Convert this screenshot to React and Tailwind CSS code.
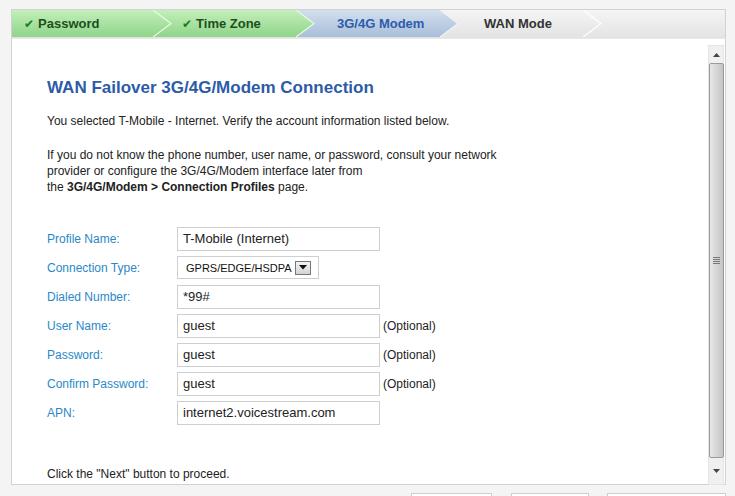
import { useState } from "react";

const tabs = [
  { label: "Password", done: true, w: "w-[141px]", pad: "pl-[12px]", kind: "green" },
  { label: "Time Zone", done: true, w: "w-[143px]", pad: "pl-[29px]", kind: "green" },
  { label: "3G/4G Modem", done: false, w: "w-[144px]", pad: "pl-[41px]", kind: "blue" },
  { label: "WAN Mode", done: false, w: "w-[143px]", pad: "pl-[44px]", kind: "gray" },
];

const tabBg = {
  green: "bg-gradient-to-b from-[#c3efbb] to-[#8fd488] text-[#1d4f1d]",
  blue: "bg-gradient-to-b from-[#d3dfed] to-[#a8bed9] text-[#2d5cad]",
  gray: "bg-gradient-to-b from-[#f5f5f5] to-[#e3e3e3] text-[#333]",
};

const arrowColors = {
  green: ["#c3efbb", "#8fd488", "#e6fbe2"],
  blue: ["#d3dfed", "#a8bed9", "#eef3f9"],
  gray: ["#f5f5f5", "#e3e3e3", "#ffffff"],
};

function Arrow({ kind, id }) {
  const [top, bottom, edge] = arrowColors[kind];
  return (
    <svg className="absolute left-full top-0 z-10" width="19" height="27" viewBox="0 0 19 27">
      <defs>
        <linearGradient id={id} x1="0" y1="0" x2="0" y2="1">
          <stop offset="0" stopColor={top} />
          <stop offset="1" stopColor={bottom} />
        </linearGradient>
      </defs>
      <polygon points="0,0 18,13.5 0,27" fill={`url(#${id})`} />
      <polyline points="0,0 18,13.5 0,27" fill="none" stroke={edge} strokeWidth="1.2" />
    </svg>
  );
}

function TextField({ value }) {
  return (
    <div className="w-[203px] h-[24px] border border-[#cfcfcf] bg-white flex items-center pl-[5px] text-[13px] text-[#222]">
      {value}
    </div>
  );
}

function SelectField({ value }) {
  return (
    <div className="w-[142px] h-[23px] border border-[#cfcfcf] bg-white flex items-center pl-[8px] text-[11px] text-[#111]">
      <span>{value}</span>
      <span className="ml-[3px] w-[16px] h-[14px] border border-[#777] bg-gradient-to-b from-[#f4f4f4] to-[#d4d4d4] flex items-center justify-center">
        <svg width="8" height="5" viewBox="0 0 8 5">
          <polygon points="0,0 8,0 4,4.5" fill="#111" />
        </svg>
      </span>
    </div>
  );
}

const rows = [
  { label: "Profile Name:", value: "T-Mobile (Internet)" },
  { label: "Connection Type:", value: "GPRS/EDGE/HSDPA", select: true },
  { label: "Dialed Number:", value: "*99#" },
  { label: "User Name:", value: "guest", optional: true },
  { label: "Password:", value: "guest", optional: true },
  { label: "Confirm Password:", value: "guest", optional: true },
  { label: "APN:", value: "internet2.voicestream.com" },
];

function Scrollbar() {
  return (
    <div className="w-[16px] h-[440px] bg-[#f0f0f0] border border-[#e4e4e4] flex flex-col items-center">
      <div className="h-[17px] w-full flex items-center justify-center">
        <svg width="7" height="4" viewBox="0 0 7 4">
          <polygon points="0,4 7,4 3.5,0" fill="#444" />
        </svg>
      </div>
      <div className="w-[15px] h-[395px] rounded-[2px] border border-[#9a9a9a] bg-gradient-to-r from-[#e8e8e8] via-[#d6d6d6] to-[#c4c4c4] flex flex-col items-center justify-center gap-[1px]">
        <span className="block w-[7px] h-px bg-[#777]" />
        <span className="block w-[7px] h-px bg-[#777]" />
        <span className="block w-[7px] h-px bg-[#777]" />
        <span className="block w-[7px] h-px bg-[#777]" />
      </div>
      <div className="flex-1 w-full flex items-center justify-center">
        <svg width="7" height="4" viewBox="0 0 7 4">
          <polygon points="0,0 7,0 3.5,4" fill="#444" />
        </svg>
      </div>
    </div>
  );
}

export default function App() {
  const [profile] = useState(rows);

  return (
    <div className="h-[496px] w-[735px] overflow-hidden bg-[#f4f4f4] font-['Liberation_Sans',Arial,sans-serif] pt-[9px] pl-[11px]">
      <div className="w-[715px]">
        <div className="flex h-[29px] border border-[#d2d2d2] border-b-0 bg-gradient-to-b from-[#f5f5f5] to-[#e3e3e3]">
          <div className="flex h-[27px] mt-0">
            {tabs.map((t, i) => (
              <div
                key={t.label}
                className={`relative ${t.w} ${t.pad} ${tabBg[t.kind]} h-[27px] flex items-center text-[13px] font-bold`}
              >
                {t.done && <span className="text-[#14801a] text-[12px] mr-[4px] font-['DejaVu_Sans']">✔</span>}
                {t.label}
                <Arrow kind={t.kind} id={`arrow-${i}`} />
              </div>
            ))}
          </div>
        </div>
        <div className="h-[447px] bg-white border border-[#d2d2d2] border-t-[#e8e8e8] flex pt-[6px]">
          <div className="flex-1 pl-[35px] pt-[33px] text-[12px] leading-[16px] text-[#222]">
            <h1 className="text-[17px] leading-[20px] font-bold text-[#2c5ba8]">
              WAN Failover 3G/4G/Modem Connection
            </h1>
            <p className="mt-[15px]">
              You selected T-Mobile - Internet. Verify the account information listed below.
            </p>
            <p className="mt-[18px]">
              If you do not know the phone number, user name, or password, consult your network
              <br />
              provider or configure the 3G/4G/Modem interface later from
              <br />
              the <b>3G/4G/Modem &gt; Connection Profiles</b> page.
            </p>
            <div className="mt-[29px] flex flex-col">
              {profile.map((r) => (
                <div key={r.label} className="h-[29px] flex items-center">
                  <span className="w-[130px] text-[#2b88c8]">{r.label}</span>
                  {r.select ? <SelectField value={r.value} /> : <TextField value={r.value} />}
                  {r.optional && <span className="ml-[3px]">(Optional)</span>}
                </div>
              ))}
            </div>
            <p className="mt-[39px]">Click the "Next" button to proceed.</p>
          </div>
          <div className="pr-[1px]">
            <Scrollbar />
          </div>
        </div>
        <div className="flex mt-[8px] pl-[400px]">
          <button className="w-[81px] h-[24px] border border-[#cfcfcf] bg-white" />
          <button className="ml-[19px] w-[78px] h-[24px] border border-[#cfcfcf] bg-white" />
          <button className="ml-[18px] w-[119px] h-[24px] border border-[#cfcfcf] bg-white" />
        </div>
      </div>
    </div>
  );
}
